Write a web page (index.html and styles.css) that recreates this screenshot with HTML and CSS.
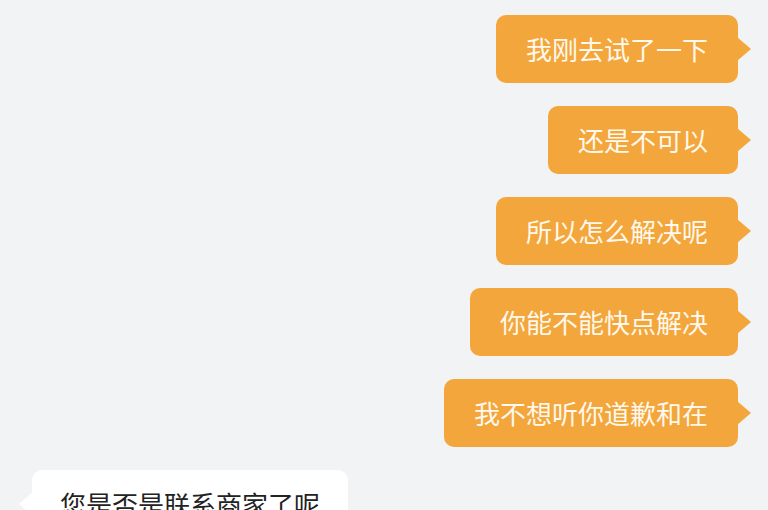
FILE: index.html
```html
<!DOCTYPE html>
<html lang="zh">
<head>
<meta charset="utf-8">
<link rel="stylesheet" href="styles.css">
</head>
<body>
<div class="chat">
  <div class="msg me">我刚去试了一下</div>
  <div class="msg me">还是不可以</div>
  <div class="msg me">所以怎么解决呢</div>
  <div class="msg me">你能不能快点解决</div>
  <div class="msg me">我不想听你道歉和在</div>
  <div class="msg other">您是否是联系商家了呢</div>
</div>
</body>
</html>
```
FILE: styles.css
```css
html, body {
  margin: 0;
  padding: 0;
  background: #f2f3f5;
  overflow: hidden;
}
body {
  width: 768px;
  height: 510px;
  font-family: "Noto Sans CJK SC", "Noto Sans", sans-serif;
}
.chat {
  display: flex;
  flex-direction: column;
  align-items: flex-end;
  gap: 23px;
  padding: 15px 30px 0 32px;
}
.msg {
  position: relative;
  height: 68px;
  line-height: 68px;
  font-size: 26px;
  padding: 0 30px;
  border-radius: 10px;
  white-space: nowrap;
}
.me {
  background: #f3a63b;
  color: #fff8ec;
}
.me::after {
  content: "";
  position: absolute;
  right: -13px;
  top: 50%;
  margin-top: -12px;
  border-left: 14px solid #f3a63b;
  border-top: 12px solid transparent;
  border-bottom: 12px solid transparent;
}
.other {
  align-self: flex-start;
  background: #ffffff;
  color: #222222;
  padding: 0 28px;
}
.other::before {
  content: "";
  position: absolute;
  left: -13px;
  top: 50%;
  margin-top: -12px;
  border-right: 14px solid #ffffff;
  border-top: 12px solid transparent;
  border-bottom: 12px solid transparent;
}
```
